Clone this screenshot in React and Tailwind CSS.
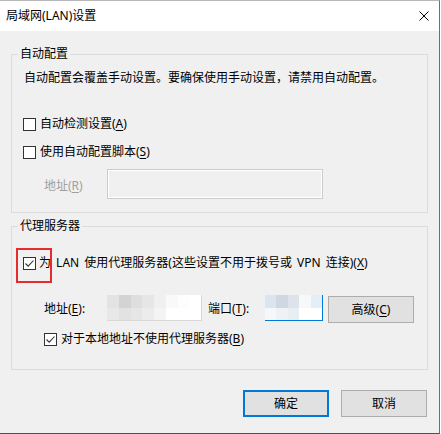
import React from "react";

function Check({ checked }) {
  return (
    <span className="w-[13px] h-[13px] border border-[#333333] bg-white flex items-center justify-center shrink-0">
      {checked && (
        <svg width="11" height="11" viewBox="0 0 11 11">
          <path d="M1.5 5.5 L4.2 8.2 L9.5 2.5" stroke="#333333" strokeWidth="1.1" fill="none" />
        </svg>
      )}
    </span>
  );
}

function U({ children }) {
  return <span className="underline underline-offset-[2px] decoration-[1px]">{children}</span>;
}

const addrRow1 = ["#e3e3e3", "#d3d3d3", "#dedede", "#e6e6e6", "#f0f0f0", "#f9f9f9", "#fdfdfd", "#ffffff"];
const addrRow2 = ["#e8e8e8", "#e2e2e2", "#e6e6e6", "#ececec", "#f4f4f4", "#ffffff", "#ffffff", "#ffffff"];
const portRow1 = ["#d9e6f2", "#cfd8e2", "#dde3ea", "#f6f8fa", "#e4eef8"];
const portRow2 = ["#f4f8fb", "#eef2f6", "#e8eef2", "#ffffff", "#ffffff"];

export default function App() {
  return (
    <div className="w-[441px] h-[434px] bg-white font-['Noto_Sans','Noto_Sans_CJK_SC',sans-serif] text-[12px] leading-[16px] text-black">
      <div className="w-[440px] h-[434px] flex flex-col border-r border-b border-t border-r-[#6f6f6f] border-b-[#505050] border-t-[#b8b8b8]">
        <div className="h-[30px] bg-white flex items-center justify-between pl-[6px] pr-[10px] shrink-0">
          <span>局域网(LAN)设置</span>
          <svg width="10" height="10" viewBox="0 0 10 10">
            <path d="M0.5 0.5 L9.5 9.5 M9.5 0.5 L0.5 9.5" stroke="#000" strokeWidth="1" />
          </svg>
        </div>
        <div className="flex-1 bg-[#f0f0f0] pt-[15px] pl-[11px]">
          <fieldset className="w-[417px] border border-[#dcdcdc] p-0 pb-[13px] m-0">
            <legend className="ml-[6px] px-[2px] leading-[16px]">自动配置</legend>
            <div className="pl-[11px]">
              <div className="mt-[8px] pl-[1px]">自动配置会覆盖手动设置。要确保使用手动设置，请禁用自动配置。</div>
              <div className="mt-[30px] h-[16px] flex items-center gap-[4px]">
                <Check />
                <span>自动检测设置(<U>A</U>)</span>
              </div>
              <div className="mt-[12px] h-[16px] flex items-center gap-[4px]">
                <Check />
                <span>使用自动配置脚本(<U>S</U>)</span>
              </div>
              <div className="mt-[9px] h-[30px] flex items-center">
                <span className="ml-[21px] w-[63px] text-[#a0a0a0] pt-[3px]">地址(<U>R</U>)</span>
                <div className="w-[216px] h-[30px] border border-[#cccccc] bg-[#f0f0f0] shadow-[inset_0_0_0_1px_#ffffff]" />
              </div>
            </div>
          </fieldset>

          <fieldset className="mt-[5px] w-[417px] border border-[#dcdcdc] p-0 pb-[22px] m-0">
            <legend className="ml-[6px] px-[2px] leading-[16px]">代理服务器</legend>
            <div className="pl-[11px]">
              <div className="mt-[21px] h-[16px] flex items-center gap-[3px] relative">
                <Check checked />
                <span className="[word-spacing:2px]">为 LAN 使用代理服务器(这些设置不用于拨号或 VPN 连接)(<U>X</U>)</span>
                <div className="absolute left-[-7px] top-[-7px] w-[36px] h-[35px] border-[2px] border-[#e52b2b]" />
              </div>
              <div className="mt-[24px] flex items-start">
                <span className="ml-[21px] w-[63px] mt-[6px]">地址(<U>E</U>):</span>
                <div className="w-[95px] h-[26px] bg-white border-r border-b border-[#d8d8d8] grid grid-cols-8 grid-rows-2 overflow-hidden">
                  {addrRow1.map((c, i) => (
                    <div key={"a1" + i} style={{ background: c }} />
                  ))}
                  {addrRow2.map((c, i) => (
                    <div key={"a2" + i} style={{ background: c }} />
                  ))}
                </div>
                <span className="ml-[6px] w-[57px] mt-[6px]">端口(<U>T</U>):</span>
                <div className="w-[58px] h-[26px] bg-white border-r border-b border-[#0078d7] grid grid-cols-5 grid-rows-2 overflow-hidden">
                  {portRow1.map((c, i) => (
                    <div key={"p1" + i} style={{ background: c }} />
                  ))}
                  {portRow2.map((c, i) => (
                    <div key={"p2" + i} style={{ background: c }} />
                  ))}
                </div>
                <button className="ml-[5px] mt-[1px] w-[86px] h-[27px] bg-[#e1e1e1] border border-[#adadad] flex items-center justify-center">
                  高级(<U>C</U>)
                </button>
              </div>
              <div className="mt-[8px] h-[16px] flex items-center gap-[4px] ml-[21px]">
                <Check checked />
                <span>对于本地地址不使用代理服务器(<U>B</U>)</span>
              </div>
            </div>
          </fieldset>

          <div className="w-[416px] mt-[20px] flex justify-end gap-[12px]">
            <button className="w-[86px] h-[27px] bg-[#e1e1e1] border-[2px] border-[#0078d7] flex items-center justify-center">确定</button>
            <button className="w-[86px] h-[27px] bg-[#e1e1e1] border border-[#adadad] flex items-center justify-center">取消</button>
          </div>
        </div>
      </div>
    </div>
  );
}
